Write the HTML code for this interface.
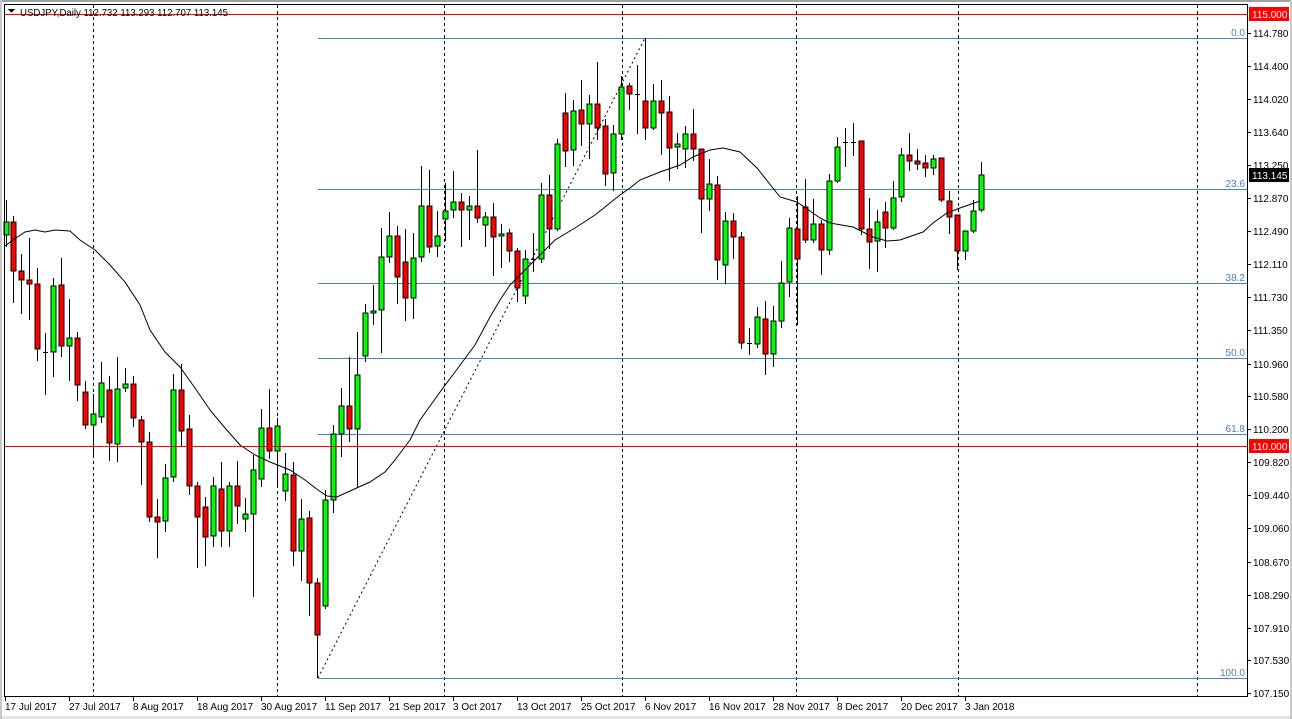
<!DOCTYPE html>
<html><head><meta charset="utf-8"><style>
html,body{margin:0;padding:0;background:#fff;width:1292px;height:719px;overflow:hidden}
svg{display:block}
text{font-family:"Liberation Sans",sans-serif;font-size:10px;fill:#000}
</style></head><body>
<svg id="s" width="1292" height="719" viewBox="0 0 1292 719" xmlns="http://www.w3.org/2000/svg" shape-rendering="crispEdges">
<rect x="0" y="0" width="1292" height="719" fill="#fff"/>
<rect x="0" y="0" width="1292" height="2" fill="#a0a0a0"/>
<rect x="0" y="716" width="1292" height="3" fill="#e3e3e3"/>
<rect x="1290" y="0" width="2" height="719" fill="#c8c8c8"/>
<rect x="0" y="0" width="2" height="719" fill="#c8c8c8"/>
<g stroke="#000" stroke-dasharray="3,3" stroke-width="1">
<line x1="93.5" y1="5" x2="93.5" y2="696"/><line x1="277.5" y1="5" x2="277.5" y2="696"/>
<line x1="444.5" y1="5" x2="444.5" y2="696"/><line x1="622.5" y1="5" x2="622.5" y2="696"/>
<line x1="796.5" y1="5" x2="796.5" y2="696"/><line x1="958.5" y1="5" x2="958.5" y2="696"/>
<line x1="1197.5" y1="5" x2="1197.5" y2="696"/>
</g>
<g stroke="#4682b4" stroke-width="1">
<line x1="318" y1="38.5" x2="1247" y2="38.5"/><line x1="318" y1="189.5" x2="1247" y2="189.5"/>
<line x1="318" y1="283.5" x2="1247" y2="283.5"/><line x1="318" y1="358.5" x2="1247" y2="358.5"/>
<line x1="318" y1="434.5" x2="1247" y2="434.5"/><line x1="318" y1="678.5" x2="1247" y2="678.5"/>
</g>
<g text-anchor="end">
<text x="1245" y="36" style="fill:#4682b4">0.0</text><text x="1245" y="187" style="fill:#4682b4">23.6</text>
<text x="1245" y="281" style="fill:#4682b4">38.2</text><text x="1245" y="356" style="fill:#4682b4">50.0</text>
<text x="1245" y="432" style="fill:#4682b4">61.8</text><text x="1245" y="676" style="fill:#4682b4">100.0</text>
</g>
<line x1="318" y1="678" x2="645" y2="38" stroke="#000" stroke-dasharray="2,3" shape-rendering="auto"/>
<g id="c"></g>
<polyline fill="none" stroke="#000" stroke-width="1" shape-rendering="auto" points="5,246 13,240 25,232 35,230 45,232 55,230 70,231 80,240 95,250 110,265 125,282 140,305 150,330 165,352 180,367 195,388 210,410 225,428 240,445 255,455 270,462 290,470 305,480 318,490 327,496 337,497 350,491 370,482 385,472 395,460 410,440 420,420 440,392 455,372 475,345 490,317 500,300 510,285 525,270 540,255 555,240 575,228 595,215 610,203 620,195 630,188 640,180 660,172 680,165 693,157 710,150 723,148 740,152 757,168 780,197 797,202 820,218 830,223 853,227 873,237 887,241 900,240 923,232 933,223 947,213 960,208 980,201"/>
<rect x="4" y="14" width="1243" height="1" fill="#f00"/>
<rect x="4" y="446" width="1243" height="1" fill="#f00"/>
<rect x="4" y="4" width="1243" height="1" fill="#000"/>
<rect x="4" y="4" width="1" height="693" fill="#000"/>
<rect x="1247" y="4" width="1" height="693" fill="#000"/>
<rect x="4" y="696" width="1244" height="1" fill="#000"/>
<path d="M8 9h7l-3.5 4z" fill="#000"/>
<text x="20" y="16" textLength="208" lengthAdjust="spacingAndGlyphs">USDJPY,Daily  112.732 113.293 112.707 113.145</text>
<g id="ticks"></g>
<g text-anchor="start">
<text x="1253" y="37">114.780</text><text x="1253" y="70">114.400</text><text x="1253" y="103">114.020</text>
<text x="1253" y="136">113.640</text><text x="1253" y="169">113.250</text><text x="1253" y="202">112.870</text>
<text x="1253" y="235">112.490</text><text x="1253" y="268">112.110</text><text x="1253" y="301">111.730</text>
<text x="1253" y="334">111.350</text><text x="1253" y="368">110.960</text><text x="1253" y="400">110.580</text>
<text x="1253" y="433">110.200</text><text x="1253" y="466">109.820</text><text x="1253" y="499">109.440</text>
<text x="1253" y="532">109.060</text><text x="1253" y="566">108.670</text><text x="1253" y="599">108.290</text>
<text x="1253" y="632">107.910</text><text x="1253" y="664">107.530</text><text x="1253" y="697">107.150</text>
</g>
<rect x="1249" y="7" width="40" height="14" fill="#f00"/><text x="1252" y="18" style="fill:#fff">115.000</text>
<rect x="1249" y="439" width="40" height="14" fill="#f00"/><text x="1252" y="450" style="fill:#fff">110.000</text>
<rect x="1249" y="168" width="40" height="14" fill="#000"/><text x="1252" y="179" style="fill:#fff">113.145</text>
<g>
<text x="5" y="710">17 Jul 2017</text><text x="69" y="710">27 Jul 2017</text><text x="133" y="710">8 Aug 2017</text>
<text x="197" y="710">18 Aug 2017</text><text x="261" y="710">30 Aug 2017</text><text x="325" y="710">11 Sep 2017</text>
<text x="389" y="710">21 Sep 2017</text><text x="453" y="710">3 Oct 2017</text><text x="517" y="710">13 Oct 2017</text>
<text x="581" y="710">25 Oct 2017</text><text x="645" y="710">6 Nov 2017</text><text x="709" y="710">16 Nov 2017</text>
<text x="773" y="710">28 Nov 2017</text><text x="837" y="710">8 Dec 2017</text><text x="901" y="710">20 Dec 2017</text>
<text x="965" y="710">3 Jan 2018</text>
</g>
</svg>
<script>
var d=[
['g',222,235,200,247],['r',222,271,216,303],['r',271,280,254,314],['r',280,284,238,320],['r',284,349,268,361],['d',352,352,333,395],['g',286,352,278,377],['r',285,346,258,357],['g',338,346,299,381],['r',338,385,332,401],
['r',392,425,381,429],['g',414,425,394,457],['g',383,417,362,423],['r',390,443,376,461],['g',389,444,357,462],['g',384,388,368,392],['r',384,418,376,427],['r',420,442,416,485],['r',442,517,432,522],['r',517,522,499,558],
['g',478,521,464,532],['g',390,477,374,482],['r',390,431,364,446],['r',429,486,415,495],['r',486,517,482,568],['r',507,537,497,566],['g',486,536,477,547],['r',489,531,462,547],['g',486,531,482,547],['r',486,506,461,524],
['g',514,519,498,532],['g',470,514,455,597],['g',428,479,409,487],['r',428,451,389,459],['g',426,451,418,486],['g',474,491,453,501],['r',475,551,462,566],['g',519,551,499,581],['r',518,583,511,616],['r',583,635,578,678],
['g',500,606,490,609],['g',434,500,425,513],['g',406,434,388,457],['r',406,429,357,442],['g',375,429,332,487],['g',313,356,304,362],['g',311,313,285,325],['g',257,310,228,353],['g',236,257,212,263],['r',236,277,226,304],
['r',262,298,229,321],['g',258,298,233,319],['g',206,257,166,262],['r',206,247,170,253],['g',236,246,211,257],['g',211,219,183,241],['g',202,210,171,218],['r',202,210,193,247],['g',206,210,196,240],['r',206,218,150,223],
['g',217,225,212,247],['r',217,237,203,276],['g',234,236,224,268],['r',233,251,229,262],['r',251,288,248,302],['g',259,296,250,304],['d',259,259,233,272],['g',195,259,183,263],['r',195,229,175,249],['g',144,229,139,231],
['r',113,151,93,167],['g',111,150,100,166],['r',110,124,80,146],['g',104,124,95,159],['r',104,128,62,140],['r',126,174,119,186],['g',134,173,125,191],['g',87,134,76,140],['r',86,94,83,110],['d',94,94,65,134],
['r',101,128,38,140],['g',101,128,84,130],['r',101,113,80,155],['r',112,148,96,181],['g',144,147,133,169],['g',134,149,126,168],['r',134,149,109,161],['r',149,199,149,233],['g',184,199,159,211],['r',185,260,176,280],
['g',221,265,212,284],['r',221,237,213,259],['r',237,343,232,349],['d',343,343,328,355],['g',317,344,307,348],['r',319,354,301,375],['g',321,354,306,367],['g',283,321,261,328],['g',228,282,218,297],['r',229,259,196,325],
['r',207,240,179,243],['g',224,240,199,243],['r',224,250,220,275],['g',181,250,174,255],['g',147,181,137,183],['d',142,142,128,167],['d',142,142,123,156],['r',141,229,141,235],['r',229,242,198,269],['g',222,241,210,272],
['r',212,228,202,248],['g',198,228,181,230],['g',155,197,148,202],['r',155,161,133,171],['r',161,164,149,170],['r',163,168,155,177],['g',159,168,155,175],['r',158,200,158,202],['r',201,217,191,234],['r',215,251,215,270],
['g',231,251,231,260],['g',211,231,200,233],['g',175,210,162,212]];
var g=document.getElementById('c'),h='';
for(var i=0;i<d.length;i++){var c=d[i],x=5+8*i+(i==0?1:0),xs=x+0.5;
h+='<line x1="'+xs+'" y1="'+c[3]+'" x2="'+xs+'" y2="'+c[4]+'" stroke="#000"/>';
if(c[0]=='d'){h+='<line x1="'+(x-2)+'" y1="'+(c[1]+0.5)+'" x2="'+(x+3)+'" y2="'+(c[1]+0.5)+'" stroke="#000"/>';}
else{var bh=Math.max(c[2]-c[1],2);h+='<rect x="'+(x-2)+'" y="'+c[1]+'" width="5" height="'+bh+'" fill="'+(c[0]=='g'?'#00ff00':'#ff0000')+'" stroke="#000" stroke-width="1"/>';}}
g.innerHTML=h;
var t='';for(var k=0;k<16;k++){var tx=5.5+64*k;t+='<line x1="'+tx+'" y1="696" x2="'+tx+'" y2="701" stroke="#000"/>';}
[33,66,99,132,165,198,231,264,297,330,364,396,429,462,495,528,562,595,628,660,693].forEach(function(y){t+='<line x1="1247" y1="'+(y+.5)+'" x2="1251" y2="'+(y+.5)+'" stroke="#000"/>';});
document.getElementById('ticks').innerHTML=t;
</script>
</body></html>
